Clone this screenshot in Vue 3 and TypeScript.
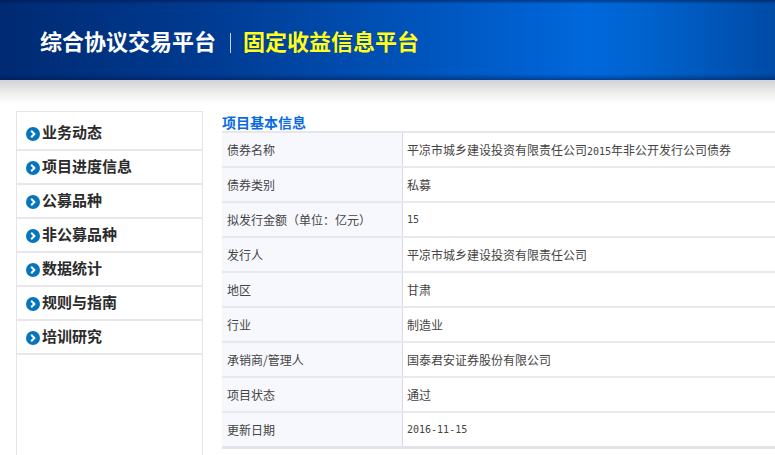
<script setup lang="ts">
const menu: string[] = ['业务动态', '项目进度信息', '公募品种', '非公募品种', '数据统计', '规则与指南', '培训研究']
const rows: { label: string; value: string; num?: string; tail?: string; mono?: boolean }[] = [
  { label: '债券名称', value: '平凉市城乡建设投资有限责任公司', num: '2015', tail: '年非公开发行公司债券' },
  { label: '债券类别', value: '私募' },
  { label: '拟发行金额（单位：亿元）', value: '15', mono: true },
  { label: '发行人', value: '平凉市城乡建设投资有限责任公司' },
  { label: '地区', value: '甘肃' },
  { label: '行业', value: '制造业' },
  { label: '承销商/管理人', value: '国泰君安证券股份有限公司' },
  { label: '项目状态', value: '通过' },
  { label: '更新日期', value: '2016-11-15', mono: true },
]
</script>

<template>
  <div class="page">
    <header class="header">
      <span class="brand">综合协议交易平台</span>
      <i class="divider"></i>
      <span class="brand yellow">固定收益信息平台</span>
    </header>
    <div class="shade"></div>
    <div class="body">
      <nav class="side">
        <div v-for="m in menu" :key="m" class="item">
          <svg class="dot" width="14" height="14" viewBox="0 0 14 14">
            <circle cx="7" cy="7" r="7" fill="#0576bd" />
            <path d="M5.2 3.8 8.4 7 5.2 10.2" fill="none" stroke="#fff" stroke-width="2" />
          </svg>
          <span class="item-text">{{ m }}</span>
        </div>
      </nav>
      <main class="main">
        <h2 class="title">项目基本信息</h2>
        <div class="table">
          <div v-for="r in rows" :key="r.label" class="row">
            <div class="label">{{ r.label }}</div>
            <div class="value" :class="{ mono: r.mono }">{{ r.value }}<span v-if="r.num" class="mono">{{ r.num }}</span>{{ r.tail }}</div>
          </div>
        </div>
      </main>
    </div>
  </div>
</template>

<style>
html, body { margin: 0; height: 100%; overflow: hidden; background: #fff; }
</style>

<style scoped>
.page {
  width: 775px;
  height: 455px;
  overflow: hidden;
  font-family: "Noto Sans CJK SC", "Liberation Sans", sans-serif;
}
.header {
  height: 80px;
  box-sizing: border-box;
  padding: 0 0 0 40px;
  display: flex;
  align-items: center;
  background:
    linear-gradient(180deg, rgba(0, 20, 70, .55) 0, rgba(0, 20, 70, 0) 4px, rgba(0, 20, 70, 0) 74px, rgba(0, 20, 70, .45) 80px),
    linear-gradient(90deg, #002a72 0, #003a90 200px, #0052b8 400px, #0068dc 590px, #0062cc 650px, #004ba6 775px);
}
.brand {
  font-size: 22px;
  line-height: 28px;
  font-weight: 700;
  color: #fff;
}
.yellow {
  color: #ffff1e;
  text-shadow: 0 0 1px #003080;
}
.divider {
  width: 1px;
  height: 20px;
  margin: 6px 12px 0 14px;
  background: #c8d4e8;
}
.shade {
  height: 23px;
  border-top: 1px solid #cfd6e2;
  background: linear-gradient(180deg, #d4d4d4 0, #eeeeee 12px, #ffffff 23px);
}
.body {
  display: flex;
  align-items: flex-start;
  padding: 7px 0 0 16px;
}
.side {
  flex: 0 0 auto;
  width: 185px;
  height: 400px;
  border: 1px solid #e4e4ea;
  border-bottom: 0;
  padding-top: 5px;
}
.item {
  height: 32px;
  border-bottom: 2px solid #e8e8ec;
  display: flex;
  align-items: center;
  padding-left: 9px;
  gap: 2px;
  font-size: 15px;
  font-weight: 700;
  color: #2b2b2b;
}
.item-text { margin-bottom: 4px; }
.dot { flex: none; margin-top: 2px; }
.main {
  flex: 0 0 auto;
  width: 560px;
  margin-left: 19px;
}
.title {
  margin: 0;
  height: 20px;
  font-size: 14px;
  line-height: 22px;
  font-weight: 700;
  color: #0a6ce0;
}
.table {
  border-top: 2px solid #e6e6ec;
  border-bottom: 3px solid #e2e2e8;
}
.row {
  display: flex;
  height: 33px;
  font-size: 12px;
  color: #444;
  line-height: 33px;
}
.row + .row { border-top: 2px solid #e8e8ee; }
.label {
  width: 175px;
  flex: none;
  padding-left: 5px;
  background: #f7f8fd;
  border-right: 1px solid #d8d8e4;
  white-space: nowrap;
}
.value {
  padding-left: 4px;
  white-space: nowrap;
}
.mono {
  font-family: "DejaVu Sans Mono", monospace;
  font-size: 10px;
}
</style>
